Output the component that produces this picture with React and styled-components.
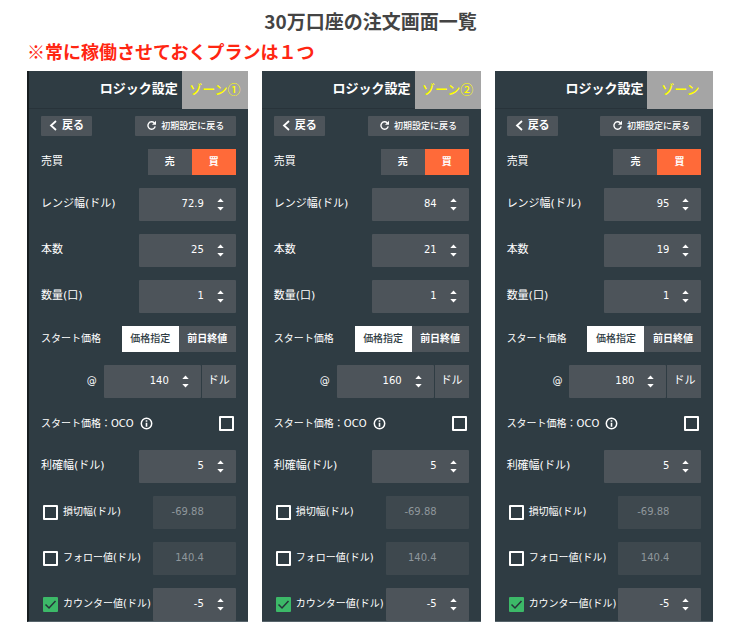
import React, { useState } from "react";
import styled, { createGlobalStyle, css } from "styled-components";

const GlobalStyle = createGlobalStyle`
  * {
    box-sizing: border-box;
  }
  body {
    margin: 0;
    background: #fff;
    font-family: "Noto Sans CJK JP", sans-serif;
  }
  button, input {
    margin: 0;
    padding: 0;
    border: 0;
    border-radius: 0;
    font: inherit;
    color: inherit;
  }
  button {
    cursor: pointer;
  }
`;

const Page = styled.main`
  padding: 6px 0 10px;
`;

const Title = styled.h1`
  margin: 0;
  font-size: 19px;
  line-height: 30px;
  font-weight: 700;
  text-align: center;
  color: #444;
`;

const Notice = styled.p`
  margin: 0 0 5px;
  padding-left: 27px;
  font-size: 18px;
  line-height: 30px;
  font-weight: 700;
  color: #ff2612;
`;

const Panels = styled.div`
  display: grid;
  grid-template-columns: 220fr 218fr 218fr;
  gap: 14px;
  padding: 0 30px 0 27px;
`;

const Panel = styled.section`
  background: #2f3c43;
  color: #fff;
  border-bottom: 1px solid #56636a;
  font-family: "DejaVu Sans", "Noto Sans CJK JP", sans-serif;
  font-size: 11px;
  line-height: 16px;
  ${(props) => props.$edge && css`
    border-left: 2px solid #171d20;
  `}
`;

const PanelHeader = styled.header`
  display: flex;
  justify-content: flex-end;
  height: 38px;
  border-bottom: 1px solid #28333a;
`;

const PanelTitle = styled.h2`
  margin: 0;
  padding-right: 4px;
  font-size: 13px;
  line-height: 36px;
  font-weight: 700;
`;

const Zone = styled.span`
  width: 66px;
  height: 38px;
  background: #a5a5a5;
  color: #ff0;
  font-family: "Noto Sans CJK JP", sans-serif;
  font-size: 13px;
  line-height: 36px;
  font-weight: 500;
  text-align: center;
`;

const Body = styled.div`
  padding: 0 12px;
`;

const Row = styled.div`
  display: flex;
  align-items: center;
  justify-content: space-between;
  height: ${(props) => (props.$compact ? 39 : 46)}px;
  &:last-child {
    height: 40px;
    padding-top: 6px;
  }
`;

const ActionRow = styled(Row)`
  height: 33px;
`;

const ActionButton = styled.button`
  display: flex;
  align-items: center;
  justify-content: center;
  gap: 4px;
  width: ${(props) => (props.$wide ? 101 : 51)}px;
  height: 20px;
  border-radius: 1px;
  background: #4d545a;
  font-size: ${(props) => (props.$wide ? 9 : 11)}px;
  font-weight: ${(props) => (props.$wide ? 500 : 700)};
`;

const Label = styled.label`
  white-space: nowrap;
  font-size: ${(props) => (props.$dense ? 10 : 11)}px;
`;

const Segment = styled.div`
  display: flex;
  height: 26px;
`;

const SegmentButton = styled.button`
  width: ${(props) => (props.$wide ? 57 : 44)}px;
  background: #4d545a;
  font-size: 10px;
  font-weight: 700;
  ${(props) => props.$active && css`
    background: ${props.$tone === "light" ? "#fff" : "#ff6a39"};
    color: ${props.$tone === "light" ? "#2f3c43" : "#fff"};
    font-weight: ${props.$tone === "light" ? 500 : 700};
  `}
`;

const Field = styled.div`
  display: flex;
  align-items: center;
  width: ${(props) => (props.$narrow ? 83 : 97)}px;
  height: 33px;
  padding-right: 11px;
  border-radius: 1px;
  background: ${(props) => (props.$disabled ? "#3e484e" : "#4d545a")};
  color: ${(props) => (props.$disabled ? "#8f979c" : "#fff")};
`;

const NumberInput = styled.input`
  flex: 1;
  min-width: 0;
  margin-right: 12px;
  background: transparent;
  color: inherit;
  font-size: 10px;
  text-align: right;
  outline: none;
  appearance: textfield;
  &::-webkit-inner-spin-button {
    display: none;
  }
`;

const Spinner = styled.div`
  display: flex;
  flex-direction: column;
  gap: 5px;
  width: 9px;
  visibility: ${(props) => (props.$hidden ? "hidden" : "visible")};
  button {
    display: flex;
    justify-content: center;
    height: 4px;
    background: transparent;
  }
`;

const PriceGroup = styled.div`
  display: flex;
  align-items: center;
  gap: 1px;
  label {
    margin-right: 6px;
  }
`;

const Unit = styled.span`
  width: 34px;
  height: 33px;
  line-height: 32px;
  background: #4d545a;
  text-align: center;
`;

const CheckLabel = styled.label`
  display: flex;
  align-items: center;
  gap: 5px;
  padding: 0 2px;
  font-size: 10px;
  white-space: nowrap;
`;

const CheckBox = styled.span`
  display: grid;
  width: 15px;
  height: 15px;
  input, svg {
    grid-area: 1 / 1;
    width: 15px;
    height: 15px;
  }
  svg {
    pointer-events: none;
  }
  input {
    appearance: none;
    border: 2px solid #fff;
    border-radius: 1px;
  }
  input:checked {
    border: 0;
    background: #3cb968;
  }
`;

const InfoLabel = styled.div`
  display: flex;
  align-items: center;
  gap: 6px;
`;

const BackIcon = () => (
  <svg width="9" height="11" viewBox="0 0 9 11" fill="none" stroke="#fff" strokeWidth="1.8">
    <path d="M7 1 2 5.500l5 4.500" />
  </svg>
);

const ReloadIcon = () => (
  <svg width="11" height="11" viewBox="0 0 11 11">
    <path d="M8.300 2.900A3.700 3.700 0 1 0 9.200 6.400" fill="none" stroke="#fff" strokeWidth="1.400" />
    <path d="M10 .8v4H6z" fill="#fff" />
  </svg>
);

const InfoIcon = () => (
  <svg width="13" height="13" viewBox="0 0 13 13">
    <circle cx="6.500" cy="6.500" r="5.200" fill="none" stroke="#fff" strokeWidth="1.500" />
    <path d="M5.700 5.800h1.600v4H5.700zM5.700 3.300h1.600v1.500H5.700z" fill="#fff" />
  </svg>
);

const Arrow = ({ down }) => (
  <svg width="7" height="4" viewBox="0 0 7 4">
    <path d={down ? "M.3 0h6.400L3.500 3.500z" : "M.3 4h6.400L3.500 .5z"} fill="#fff" />
  </svg>
);

function NumberField({ id, value, narrow, disabled, label }) {
  const [current, setCurrent] = useState(value);
  const move = (step) => setCurrent(Number((Number(current) + step).toFixed(2)));

  return (
    <Field $narrow={narrow} $disabled={disabled}>
      <NumberInput
        id={id}
        type="number"
        step="any"
        aria-label={label}
        value={current}
        disabled={disabled}
        onChange={(e) => setCurrent(e.target.value)}
      />
      <Spinner $hidden={disabled}>
        <button type="button" aria-label="増やす" onClick={() => move(1)}><Arrow /></button>
        <button type="button" aria-label="減らす" onClick={() => move(-1)}><Arrow down /></button>
      </Spinner>
    </Field>
  );
}

function NumberRow({ id, label, value }) {
  return (
    <Row>
      <Label htmlFor={id}>{label}</Label>
      <NumberField id={id} value={value} />
    </Row>
  );
}

function Check({ id, checked, onChange }) {
  return (
    <CheckBox>
      <input id={id} type="checkbox" checked={checked} onChange={(e) => onChange(e.target.checked)} />
      {checked && (
        <svg viewBox="0 0 15 15" fill="none" stroke="#26343a" strokeWidth="1.500">
          <path d="M2.500 7.500 6 11l6.500-7" />
        </svg>
      )}
    </CheckBox>
  );
}

function OptionRow({ id, label, value, defaultOn = false }) {
  const [on, setOn] = useState(defaultOn);

  return (
    <Row>
      <CheckLabel>
        <Check id={id} checked={on} onChange={setOn} />
        {label}
      </CheckLabel>
      <NumberField narrow label={label} value={value} disabled={!on} />
    </Row>
  );
}

function OrderPanel({ id, zone, range, count, price, edge }) {
  const [side, setSide] = useState("買");
  const [priceType, setPriceType] = useState("価格指定");
  const [oco, setOco] = useState(false);

  return (
    <Panel $edge={edge}>
      <PanelHeader>
        <PanelTitle>ロジック設定</PanelTitle>
        <Zone>{zone}</Zone>
      </PanelHeader>
      <Body>
        <ActionRow>
          <ActionButton type="button"><BackIcon />戻る</ActionButton>
          <ActionButton type="button" $wide><ReloadIcon />初期設定に戻る</ActionButton>
        </ActionRow>
        <Row $compact>
          <Label as="span">売買</Label>
          <Segment>
            {["売", "買"].map((name) => (
              <SegmentButton key={name} type="button" $active={side === name} onClick={() => setSide(name)}>
                {name}
              </SegmentButton>
            ))}
          </Segment>
        </Row>
        <NumberRow id={`${id}-range`} label="レンジ幅(ドル)" value={range} />
        <NumberRow id={`${id}-count`} label="本数" value={count} />
        <NumberRow id={`${id}-lot`} label="数量(口)" value={1} />
        <Row $compact>
          <Label as="span" $dense>スタート価格</Label>
          <Segment>
            {["価格指定", "前日終値"].map((name) => (
              <SegmentButton
                key={name}
                type="button"
                $wide
                $tone="light"
                $active={priceType === name}
                onClick={() => setPriceType(name)}
              >
                {name}
              </SegmentButton>
            ))}
          </Segment>
        </Row>
        <Row>
          <span />
          <PriceGroup>
            <Label $dense htmlFor={`${id}-price`}>@</Label>
            <NumberField id={`${id}-price`} value={price} />
            <Unit>ドル</Unit>
          </PriceGroup>
        </Row>
        <Row $compact>
          <InfoLabel>
            <Label $dense htmlFor={`${id}-oco`}>スタート価格：OCO</Label>
            <InfoIcon />
          </InfoLabel>
          <CheckLabel as="span">
            <Check id={`${id}-oco`} checked={oco} onChange={setOco} />
          </CheckLabel>
        </Row>
        <NumberRow id={`${id}-profit`} label="利確幅(ドル)" value={5} />
        <OptionRow id={`${id}-loss`} label="損切幅(ドル)" value={-69.88} />
        <OptionRow id={`${id}-follow`} label="フォロー値(ドル)" value={140.4} />
        <OptionRow id={`${id}-counter`} label="カウンター値(ドル)" value={-5} defaultOn />
      </Body>
    </Panel>
  );
}

export default function App() {
  return (
    <React.Fragment>
      <GlobalStyle />
      <Page>
        <Title>30万口座の注文画面一覧</Title>
        <Notice>※常に稼働させておくプランは１つ</Notice>
        <Panels>
          <OrderPanel id="zone1" zone="ゾーン①" range={72.9} count={25} price={140} edge />
          <OrderPanel id="zone2" zone="ゾーン②" range={84} count={21} price={160} />
          <OrderPanel id="zone3" zone="ゾーン" range={95} count={19} price={180} />
        </Panels>
      </Page>
    </React.Fragment>
  );
}
